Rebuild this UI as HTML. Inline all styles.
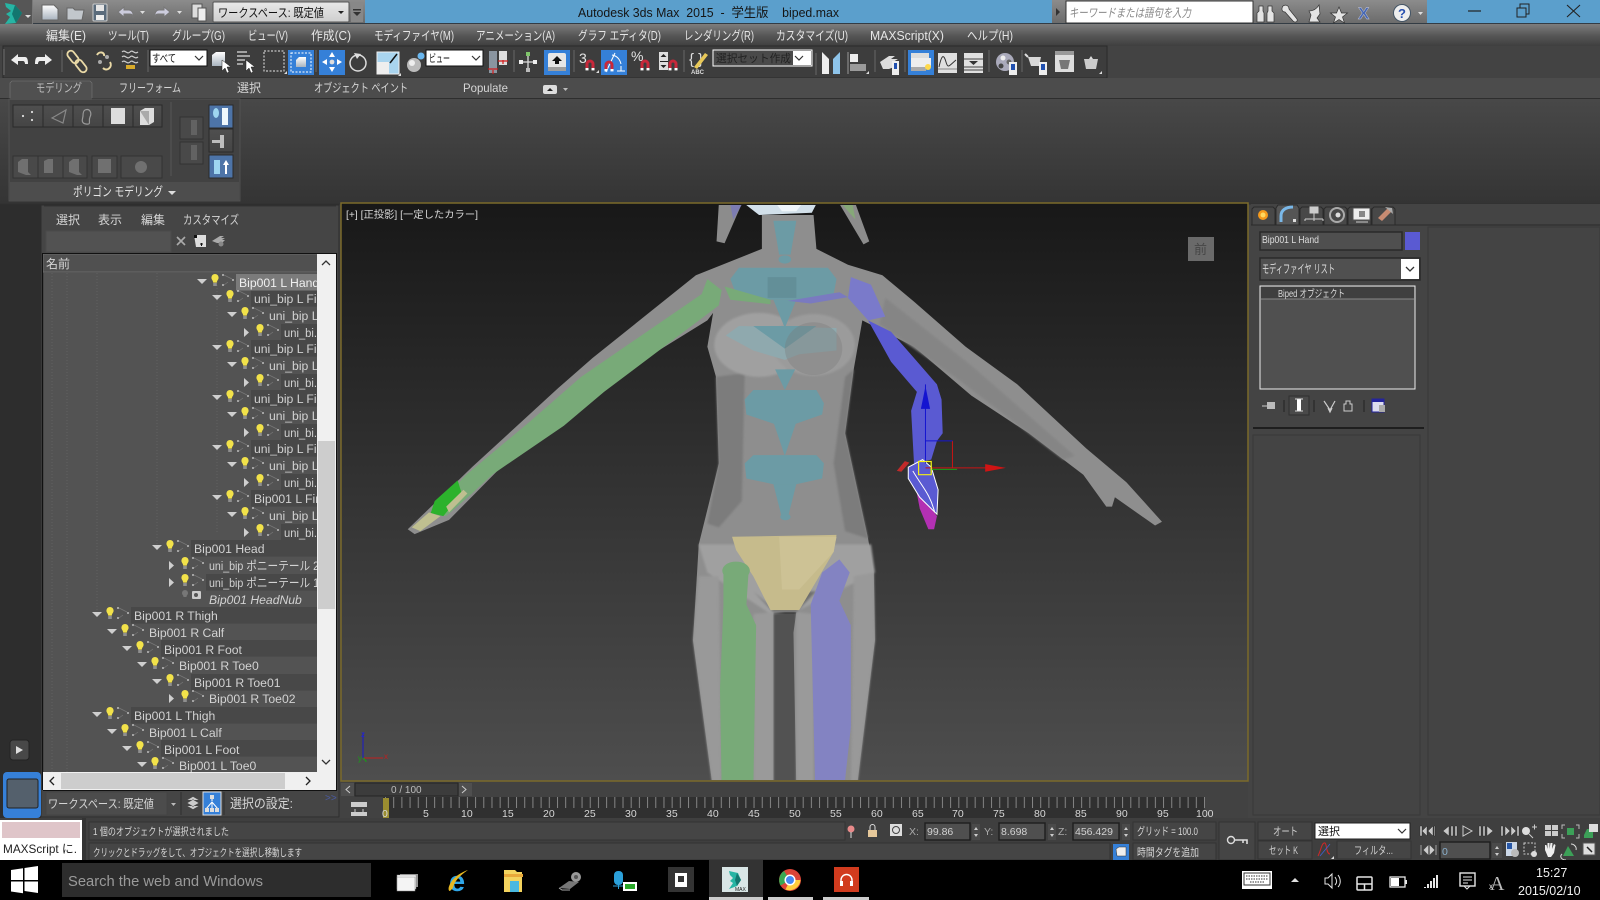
<!DOCTYPE html>
<html lang="ja"><head><meta charset="utf-8"><title>Autodesk 3ds Max 2015</title>
<style>
html,body{margin:0;padding:0;background:#444;width:1600px;height:900px;overflow:hidden}
svg{display:block;position:absolute;left:0;top:0}
text{font-family:"Liberation Sans","Noto Sans CJK JP",sans-serif;font-size:12px;fill:#d6d6d6}
.m text,.m{font-size:12.5px;fill:#e6e6e6}
.n{vector-effect:non-scaling-stroke}
.k{fill:#111}
.g{fill:#a9a9a9}
.t{font-size:12.2px;fill:#d2d2d2}
</style></head><body>
<svg width="1600" height="900" viewBox="0 0 1600 900" xmlns="http://www.w3.org/2000/svg">
<defs>
<linearGradient id="qa" x1="0" y1="0" x2="0" y2="1"><stop offset="0" stop-color="#8c8c8c"/><stop offset="1" stop-color="#6a6a6a"/></linearGradient>
<linearGradient id="menu" x1="0" y1="0" x2="0" y2="1"><stop offset="0" stop-color="#7d7d7d"/><stop offset=".55" stop-color="#555"/><stop offset="1" stop-color="#3f3f3f"/></linearGradient>
<linearGradient id="rib" x1="0" y1="0" x2="0" y2="1"><stop offset="0" stop-color="#484848"/><stop offset="1" stop-color="#343434"/></linearGradient>
<linearGradient id="vp" x1="0" y1="0" x2="0" y2="1"><stop offset="0" stop-color="#181818"/><stop offset="1" stop-color="#4e4e4e"/></linearGradient>
<linearGradient id="wk" x1="0" y1="0" x2="0" y2="1"><stop offset="0" stop-color="#e8e8e8"/><stop offset="1" stop-color="#cfcfcf"/></linearGradient>
<linearGradient id="ic" x1="0" y1="0" x2="0" y2="1"><stop offset="0" stop-color="#fff"/><stop offset="1" stop-color="#a9b4bf"/></linearGradient>
<linearGradient id="btn" x1="0" y1="0" x2="0" y2="1"><stop offset="0" stop-color="#4f4f4f"/><stop offset="1" stop-color="#454545"/></linearGradient>
<pattern id="tick" x="385" y="797" width="8.19" height="12" patternUnits="userSpaceOnUse"><rect width="1" height="11" fill="#858585"/></pattern>
<clipPath id="tree"><rect x="44" y="273" width="273" height="499"/></clipPath>
<clipPath id="vpc"><rect x="342" y="205" width="905" height="575"/></clipPath>
<filter id="sf" x="-5%" y="-5%" width="110%" height="110%"><feGaussianBlur stdDeviation="2 2.5"/></filter>
<g id="bulb" transform="translate(0 2)"><path d="M-24 -10a3.6 3.6 0 0 1 3.6 3.6c0 2-1.6 2.6-1.800 5h-3.600c-.2-2.400-1.800-3-1.800-5a3.600 3.600 0 0 1 3.600-3.600z" fill="#f2e24a"/><rect x="-25.800" y="-1" width="3.600" height="3" fill="#8f8f8f"/><circle cx="-16" cy="-9" r=".9" fill="#ddd"/><circle cx="-16" cy="1" r=".9" fill="#ddd"/><circle cx="-6" cy="-4" r=".9" fill="#ddd"/><path d="M-15 -9l8 4M-15 1l4-3" stroke="#777" stroke-width=".7" fill="none"/></g>
<g id="e"><path d="M-42 -3h10l-5 5z" fill="#cfcfcf"/><use href="#bulb"/></g>
<g id="c"><path d="M-40 -4l5 4.500-5 4.500z" fill="#cfcfcf"/><use href="#bulb"/></g>
<g id="magr"><path d="M-4.500 6v-6a4.500 4.500 0 0 1 9 0v6h-3v-6a1.500 1.500 0 0 0-3 0v6z" fill="#c8283a"/><rect x="-4.500" y="4" width="3" height="2.400" fill="#fff"/><rect x="1.500" y="4" width="3" height="2.400" fill="#fff"/></g>
<path id="cor" d="M0 3l3-3v3z" fill="#ddd"/>
</defs>

<!-- base -->
<rect width="1600" height="900" fill="#444"/>
<rect y="204" width="41" height="656" fill="#2d2d2d"/>

<!-- title bar -->
<rect width="1600" height="24" fill="#5b9fcc"/>
<rect width="365" height="24" fill="url(#qa)"/>
<rect x="1052" width="375" height="24" fill="url(#qa)"/>
<rect y="23" width="1600" height="1" fill="#333c44"/>
<text x="578" y="17" style="font-size:13px;fill:#151515" textLength="261" lengthAdjust="spacingAndGlyphs" xml:space="preserve">Autodesk 3ds Max  2015  -  学生版    biped.max</text>
<!-- logo -->
<rect x="0" y="0" width="33" height="33" fill="#787878"/><rect x="0" y="0" width="32" height="25" fill="#565656"/>
<rect x="0" y="25" width="33" height="8" fill="#b5b5b5"/>
<path d="M5 3l10 2 7 8-6 10-11 1 5-7-4-3 5-3-5-4z" fill="#27b5a4"/><path d="M15 5l7 8-6 10-4-9z" fill="#13776f"/>
<text x="9" y="32" style="font-size:7px;fill:#222;font-weight:bold">MAX</text>
<path d="M25 15h6l-3 3z" fill="#ddd"/>
<!-- QAT -->
<g fill="none" stroke="#e6e6e6">
<path d="M42 5h12l4 4v11H42z" fill="url(#ic)" stroke="#666"/>
<path d="M67 8h6l2 2h9l-2 10H67z" fill="#c2c7cc" stroke="#666"/>
<rect x="93" y="4" width="14" height="17" rx="1" fill="#5a6b7b" stroke="#ccc"/><rect x="96" y="5" width="8" height="6" fill="#e5e5e5" stroke="none"/><rect x="96" y="15" width="8" height="5" fill="#eee" stroke="none"/>
<path d="M124 7l-6 5 6 5v-3h6c2 0 3 1 3 4 1-6-2-8-4-8h-5z" fill="#ccd" stroke="#777"/>
<path d="M164 7l6 5-6 5v-3h-6c-2 0-3 1-3 4-1-6 2-8 4-8h5z" fill="#ccd" stroke="#777"/>
<rect x="192" y="4" width="10" height="14" fill="#ddd" stroke="#555"/><rect x="198" y="8" width="8" height="13" fill="#eee" stroke="#555"/>
</g>
<path d="M140 11h5l-2.500 3zM177 11h5l-2.500 3z" fill="#ddd"/>
<rect x="213" y="2" width="136" height="20" rx="1" fill="url(#wk)" stroke="#555"/>
<text x="218" y="17" class="k" textLength="106" lengthAdjust="spacingAndGlyphs">ワークスペース: 既定値</text>
<path d="M338 11h6l-3 3z" fill="#222"/>
<rect x="351" y="2" width="12" height="20" fill="#888"/><path d="M353 9h8v1.500h-8zM353 12h8l-4 4z" fill="#333"/>
<!-- search -->
<path d="M1056 8l4 4-4 4z" fill="#333"/>
<rect x="1066" y="1" width="187" height="22" fill="#fff" stroke="#333"/>
<text x="1069" y="17" style="font-style:italic;fill:#888;font-size:12px" textLength="122" lengthAdjust="spacingAndGlyphs">キーワードまたは語句を入力</text>
<g fill="#e4e4e4" stroke="#333" stroke-width=".7">
<path d="M1259 6h4v5l1 2v9h-7v-9l2-2zM1268 6h4v5l2 2v9h-7v-9l1-2z"/>
<path d="M1283 6c3-2 6 0 6 3l8 10c1 3-2 4-4 2l-8-9c-3 0-4-3-2-6z"/>
<path d="M1309 22h11l-3-4 3-4-1-9c-3 5-7 6-10 6l2 4z"/>
<path d="M1339 7l2.500 6h6l-5 4 2 6-5.500-3.500-5.500 3.500 2-6-5-4h6z"/>
</g>
<text x="1358" y="19" style="font-size:17px;font-weight:bold;fill:#4668b4;stroke:#ccd;stroke-width:.4">X</text>
<circle cx="1402" cy="13" r="8.500" fill="#eee" stroke="#456"/><text x="1398" y="18" style="font-size:13px;font-weight:bold;fill:#2850b0">?</text>
<path d="M1418 12h5l-2.500 3z" fill="#ddd"/>
<path d="M1468 11h13" stroke="#222" stroke-width="1.200"/>
<path d="M1517 8h9v9h-9zM1520 8V4h9v10h-3" fill="none" stroke="#222" stroke-width="1"/>
<path d="M1567 5l13 12M1580 5l-13 12" stroke="#222" stroke-width="1.100"/>

<!-- menu bar -->
<rect y="24" width="1600" height="22" fill="url(#menu)"/>
<g class="m">
<text x="46" y="40" textLength="40" lengthAdjust="spacingAndGlyphs">編集(E)</text>
<text x="108" y="40" textLength="41" lengthAdjust="spacingAndGlyphs">ツール(T)</text>
<text x="172" y="40" textLength="53" lengthAdjust="spacingAndGlyphs">グループ(G)</text>
<text x="248" y="40" textLength="40" lengthAdjust="spacingAndGlyphs">ビュー(V)</text>
<text x="311" y="40" textLength="40" lengthAdjust="spacingAndGlyphs">作成(C)</text>
<text x="374" y="40" textLength="80" lengthAdjust="spacingAndGlyphs">モディファイヤ(M)</text>
<text x="476" y="40" textLength="79" lengthAdjust="spacingAndGlyphs">アニメーション(A)</text>
<text x="578" y="40" textLength="83" lengthAdjust="spacingAndGlyphs">グラフ エディタ(D)</text>
<text x="684" y="40" textLength="70" lengthAdjust="spacingAndGlyphs">レンダリング(R)</text>
<text x="776" y="40" textLength="72" lengthAdjust="spacingAndGlyphs">カスタマイズ(U)</text>
<text x="870" y="40" textLength="74" lengthAdjust="spacingAndGlyphs">MAXScript(X)</text>
<text x="967" y="40" textLength="46" lengthAdjust="spacingAndGlyphs">ヘルプ(H)</text>
</g>

<!-- main toolbar -->
<rect y="46" width="1600" height="32" fill="#434343"/>
<rect x="3" y="46" width="1104" height="32" fill="#3d3d3d" stroke="#2a2a2a"/>
<rect x="3" y="49" width="2" height="26" fill="#555"/>
<g id="tb">
<path d="M11 60l7-6v3h7c2 0 3 2 3 7h-3c0-2-1-3-2-3h-5v4z" fill="#eee"/>
<path d="M52 60l-7-6v3h-7c-2 0-3 2-3 7h3c0-2 1-3 2-3h5v4z" fill="#eee"/>
<path d="M62 50v22" stroke="#666"/>
<g fill="none" stroke="#e9d9a6" stroke-width="1.800"><rect x="-3.500" y="-7" width="7" height="14" rx="3.500" transform="translate(73 57) rotate(-38)"/><rect x="-3.500" y="-7" width="7" height="14" rx="3.500" transform="translate(81 66) rotate(-38)"/></g>
<path d="M97 55c2-4 8-3 7 1M110 62c3 5-3 10-7 6" fill="none" stroke="#e9d9a6" stroke-width="2"/><circle cx="100" cy="62" r="2" fill="#aaa"/><circle cx="107" cy="57" r="2" fill="#aaa"/>
<path d="M122 52c3-3 5 3 8 0s4 3 8 0M122 57c3-3 5 3 8 0s4 3 8 0M122 62c3-3 5 3 8 0s4 3 8 0" fill="none" stroke="#ccc" stroke-width="1.200"/><path d="M126 67h9" stroke="#d8aa2a" stroke-width="4"/>
<path d="M148 50v22" stroke="#666"/>
<rect x="150" y="50" width="57" height="16" fill="#fff" stroke="#111"/>
<text x="152" y="62" class="k" style="font-size:11px" textLength="24" lengthAdjust="spacingAndGlyphs">すべて</text>
<path d="M195 56l4 4 4-4" fill="none" stroke="#333" stroke-width="1.200"/>
<path d="M212 55l4-3h9v14h-13z" fill="url(#ic)"/>
<path d="M222 60l9 7-4 0 2 5-2 1-2-5-3 3z" fill="#fff" stroke="#222" stroke-width=".5"/>
<path d="M237 52h10M237 56h13M237 60h8M237 64h6" stroke="#ddd" stroke-width="1.300"/>
<path d="M246 60l9 7-4 0 2 5-2 1-2-5-3 3z" fill="#fff" stroke="#222" stroke-width=".5"/>
<rect x="264" y="51" width="20" height="20" fill="none" stroke="#e6e6e6" stroke-dasharray="2 1.500"/><use href="#cor" x="284" y="71"/>
<rect x="288" y="50" width="26" height="25" fill="#3580d8"/><rect x="291" y="53" width="20" height="19" fill="none" stroke="#fff" stroke-dasharray="2 1.500"/><path d="M296 60l3-3h7v10h-10z" fill="url(#ic)"/>
<path d="M316 50v22" stroke="#666"/>
<rect x="319" y="50" width="26" height="25" fill="#3580d8"/><circle cx="332" cy="62" r="2.400" fill="#ddd"/><path d="M332 52l3 5h-6zM332 72l3-5h-6zM322 62l5-3v6zM342 62l-5-3v6z" fill="#fff"/>
<circle cx="358" cy="63" r="8" fill="none" stroke="#ddd" stroke-width="1.500"/><path d="M354 53l7 1-4 5z" fill="#ddd"/>
<rect x="377" y="52" width="22" height="22" fill="#a9d4ee" stroke="#eee"/><rect x="377" y="62" width="12" height="12" fill="#eee"/><path d="M390 63l7-9" stroke="#111" stroke-width="1.500"/><use href="#cor" x="398" y="73"/>
<circle cx="414" cy="65" r="7" fill="#bbb"/><circle cx="412" cy="63" r="3" fill="#eee"/><circle cx="421" cy="56" r="3.500" fill="#6ab7ef"/>
<rect x="426" y="50" width="57" height="16" fill="#fff" stroke="#111"/>
<text x="429" y="62" class="k" style="font-size:11px" textLength="21" lengthAdjust="spacingAndGlyphs">ビュー</text>
<path d="M472 56l4 4 4-4" fill="none" stroke="#333" stroke-width="1.200"/>
<rect x="489" y="51" width="8" height="22" fill="#8a95a0"/><rect x="499" y="51" width="8" height="14" fill="#ddd"/><path d="M493 70v4M488 69h10M503 60v4M498 61h10" stroke="#d01c1c" stroke-width="1.200"/>
<path d="M514 50v22" stroke="#666"/>
<path d="M528 54v16M520 62h16" stroke="#ddd" stroke-width="1.300"/><rect x="526" y="52" width="4" height="4" fill="#7fc46a"/><rect x="519" y="60" width="4" height="4" fill="#eee"/><rect x="533" y="60" width="4" height="4" fill="#eee"/><rect x="526" y="68" width="4" height="4" fill="#bbb"/>
<rect x="544" y="50" width="26" height="25" fill="#3580d8"/><rect x="548" y="53" width="18" height="17" rx="2" fill="#e6e6e6"/><rect x="548" y="67" width="18" height="4" fill="#9e9e9e"/><path d="M557 56l5 5h-3v3h-4v-3h-3z" fill="#111"/>
<path d="M574 50v22" stroke="#666"/>
<text x="579" y="63" style="font-size:14px;fill:#e6e6e6">3</text><use href="#magr" x="590" y="64"/><use href="#cor" x="596" y="70"/>
<rect x="601" y="50" width="26" height="25" fill="#3580d8"/><path d="M606 72l9-19" stroke="#fff"/><path d="M612 55c6 1 8 5 9 9" stroke="#fff" fill="none"/><path d="M617 71h8M621 66v5" stroke="#fff"/><use href="#magr" x="609" y="65"/>
<text x="631" y="61" style="font-size:14px;fill:#e6e6e6">%</text><use href="#magr" x="645" y="64"/>
<rect x="659" y="52" width="9" height="18" fill="#ddd"/><path d="M663.500 54l3 3h-6zM660 61h8v1h-8zM663.500 68l3-3h-6z" fill="#222"/><use href="#magr" x="673" y="64"/>
<path d="M684 50v22" stroke="#666"/>
<text x="689" y="64" style="font-size:15px;fill:#ddd">{ }</text><path d="M694 67l11-14 3 2-11 14z" fill="#e8c858"/><text x="691" y="74" style="font-size:6px;font-weight:bold;fill:#ddd">ABC</text>
<rect x="713" y="50" width="99" height="16" fill="#4a4a4a" stroke="#fff"/><rect x="793" y="51" width="18" height="14" fill="#fff"/>
<text x="716" y="62" style="font-size:11px;fill:#222" textLength="75" lengthAdjust="spacingAndGlyphs">選択セット作成</text>
<path d="M795 56l4 4 4-4" fill="none" stroke="#333" stroke-width="1.200"/>
<path d="M816 53v22" stroke="#666"/>
<path d="M822 52l7 7v15h-7z" fill="#eee"/><path d="M840 52l-7 7v15h7z" fill="#8ec4ea"/>
<path d="M848 52v22" stroke="#999"/><rect x="850" y="54" width="8" height="8" fill="#eee"/><rect x="850" y="64" width="16" height="7" fill="#9a9a9a"/><use href="#cor" x="866" y="71"/>
<path d="M875 50v22" stroke="#666"/>
<path d="M880 62l9-6h6l-4 3h7l-5 3h5l-4 3h5l-10 4h-6z" fill="#ddd"/><rect x="892" y="61" width="7" height="14" fill="#eee"/><rect x="894" y="63" width="3" height="6" fill="#2050b0"/>
<path d="M905 50v22" stroke="#666"/>
<rect x="908" y="50" width="26" height="25" fill="#3580d8"/><rect x="911" y="53" width="18" height="5" fill="#ddd"/><rect x="911" y="58" width="20" height="9" fill="#eee"/><rect x="911" y="67" width="15" height="4" fill="#aaa"/><circle cx="928" cy="67" r="3" fill="#ffd94a"/>
<rect x="938" y="53" width="19" height="20" fill="#e0e0e0"/><path d="M939 67c3-14 5-12 7-5s3 4 10-2" fill="none" stroke="#333"/><path d="M938 69h19" stroke="#888"/>
<rect x="964" y="53" width="19" height="20" fill="#e0e0e0"/><path d="M964 59h19M964 67h19M964 70h19" stroke="#444"/><path d="M969 61h9l-4.500 4z" fill="#333"/>
<path d="M989 50v22" stroke="#666"/>
<circle cx="1005" cy="62" r="9" fill="#aab"/><circle cx="1003" cy="58" r="2.500" fill="#eee"/><circle cx="1009" cy="62" r="2.500" fill="#666"/><circle cx="1001" cy="66" r="2.500" fill="#444"/><rect x="1009" y="62" width="8" height="13" fill="#eee"/><rect x="1011" y="64" width="4" height="6" fill="#2050b0"/>
<path d="M1022 50v22" stroke="#666"/>
<path d="M1028 57h13l-2 9h-8z" fill="#d8d8d8"/><path d="M1028 57l-3-3" stroke="#ddd" stroke-width="2"/><rect x="1039" y="62" width="8" height="13" fill="#eee"/><rect x="1041" y="64" width="4" height="6" fill="#2050b0"/>
<rect x="1055" y="51" width="19" height="21" fill="#ddd"/><rect x="1055" y="51" width="19" height="4" fill="#999"/><path d="M1059 60h11l-2 9h-7z" fill="#777"/>
<path d="M1084 59h14l-2 10h-10z" fill="#ccc"/><path d="M1089 59l2-3 2 3z" fill="#ddd"/><use href="#cor" x="1099" y="71"/>
</g>

<!-- ribbon -->
<rect y="78" width="1600" height="20" fill="#4c4c4c"/>
<rect y="98" width="1600" height="1" fill="#2e2e2e"/>
<rect y="99" width="1600" height="105" fill="url(#rib)"/>
<rect x="9" y="99" width="231" height="102" fill="#424242" stroke="#555" stroke-width=".8"/>
<path d="M10 100v-17l2-2h78l2 2v17z" fill="#505050" stroke="none"/><path d="M10 98v-15l2-2h78l2 2v15" fill="none" stroke="#777" stroke-width=".6"/>
<g class="g" style="font-size:12px">
<text x="36" y="92" style="fill:#bdbdbd" textLength="46" lengthAdjust="spacingAndGlyphs">モデリング</text>
<text x="119" y="92" textLength="62" lengthAdjust="spacingAndGlyphs">フリーフォーム</text>
<text x="237" y="92" textLength="24" lengthAdjust="spacingAndGlyphs">選択</text>
<text x="314" y="92" textLength="94" lengthAdjust="spacingAndGlyphs">オブジェクト ペイント</text>
<text x="463" y="92" textLength="45" lengthAdjust="spacingAndGlyphs">Populate</text>
</g>
<rect x="543" y="85" width="14" height="9" rx="2" fill="#ddd"/><path d="M547 91l3-3 3 3z" fill="#222"/><path d="M563 88h5l-2.500 3z" fill="#bbb"/>
<rect x="10" y="182" width="229" height="19" fill="#4d4d4d"/>
<text x="73" y="196" style="font-size:12.5px;fill:#e4e4e4" textLength="90" lengthAdjust="spacingAndGlyphs">ポリゴン モデリング</text><path d="M168 191h8l-4 4z" fill="#ddd"/>
<path d="M171 102v74" stroke="#555"/>
<g fill="url(#btn)" stroke="#2a2a2a">
<rect x="13" y="105" width="30" height="22"/><rect x="43" y="105" width="30" height="22"/><rect x="73" y="105" width="30" height="22"/><rect x="103" y="105" width="30" height="22"/><rect x="133" y="105" width="29" height="22"/>
<rect x="209" y="129" width="24" height="23"/>
</g>
<g fill="#494949" stroke="#333">
<rect x="13" y="156" width="25" height="22"/><rect x="38" y="156" width="25" height="22"/><rect x="63" y="156" width="24" height="22"/><rect x="92" y="156" width="25" height="22"/><rect x="121" y="156" width="41" height="22"/>
<rect x="180" y="117" width="23" height="22"/><rect x="180" y="142" width="23" height="22"/>
</g>
<g stroke="#2a2a2a" fill="#4d74a8"><rect x="209" y="105" width="24" height="23"/><rect x="209" y="155" width="24" height="23"/></g>
<circle cx="23" cy="116" r="1.100" fill="#ddd"/><circle cx="32" cy="112" r="1.100" fill="#ddd"/><circle cx="32" cy="120" r="1.100" fill="#ddd"/>
<path d="M52 118l14-8-3 13z" fill="none" stroke="#888" stroke-width="1.200"/>
<path d="M85 110c5-2 7 3 5 7s2 8-4 7-3-6-3-8 0-5 2-6z" fill="none" stroke="#999" stroke-width="1.200"/>
<rect x="111" y="108" width="14" height="16" fill="#ddd"/>
<path d="M140 111l5-3h9v14l-5 3h-9z" fill="#ddd"/><path d="M149 125v-14h-9" fill="#aaa"/>
<g fill="#707070"><path d="M18 172v-10l4-3h6v13l3 3h-5zM44 161l4-2h5v14h-9z"/><path d="M69 172v-10l4-3h6v13l3 3h-5z"/><rect x="98" y="159" width="13" height="14"/><circle cx="141" cy="167" r="6"/></g>
<path d="M191 120h6v15h-6zM191 145h6v15h-6z" fill="#626262"/>
<ellipse cx="216" cy="113" rx="3" ry="5" fill="#9fd6f0"/><rect x="222" y="108" width="6" height="17" fill="#eef7fc"/>
<path d="M212 140h8v-5h4v13h-4v-5h-8z" fill="#bdbdbd"/>
<rect x="214" y="160" width="6" height="14" fill="#9fd6f0"/><path d="M226 160l3 5h-2v9h-2v-9h-2z" fill="#fff"/>
<path d="M0 204h1600" stroke="#303030"/>

<!-- scene explorer -->
<rect x="41" y="205" width="298" height="612" fill="#454545" stroke="#2d2d2d"/>
<path d="M44 206h292" stroke="#333"/>
<g class="g" style="fill:#c3c3c3"><text x="56" y="224" textLength="24" lengthAdjust="spacingAndGlyphs">選択</text><text x="98" y="224" textLength="24" lengthAdjust="spacingAndGlyphs">表示</text><text x="141" y="224" textLength="24" lengthAdjust="spacingAndGlyphs">編集</text><text x="183" y="224" textLength="56" lengthAdjust="spacingAndGlyphs">カスタマイズ</text></g>
<rect x="46" y="231" width="125" height="21" fill="#525252" stroke="#4a4a4a"/>
<path d="M177 237l8 8M185 237l-8 8" stroke="#aaa" stroke-width="1.600"/>
<path d="M194 235h12v12h-10z" fill="#ddd"/><rect x="194" y="235" width="3" height="3" fill="#111"/><path d="M200 244h3M201.500 243v3" stroke="#111"/>
<path d="M212 241l8-5h4l-3 2h4l-3 2h3l-3 3h-5z" fill="#aaa"/><circle cx="221" cy="244" r="2.500" fill="#888"/>
<rect x="43" y="254" width="275" height="18" fill="#505050" stroke="#6a6a6a"/>
<text x="46" y="268" style="fill:#d5d5d5" textLength="24" lengthAdjust="spacingAndGlyphs">名前</text>
<rect x="44" y="273" width="273" height="499" fill="#535353"/>
<rect x="317" y="254" width="19" height="536" fill="#f0f0f0"/>
<rect x="318" y="441" width="17" height="168" fill="#cdcdcd"/>
<path d="M322 265l4-4 4 4M322 760l4 4 4-4" fill="none" stroke="#333" stroke-width="1.300"/>
<rect x="43" y="772" width="293" height="18" fill="#f0f0f0"/>
<rect x="61" y="773" width="224" height="16" fill="#cdcdcd"/>
<path d="M54 777l-4 4 4 4M306 777l4 4-4 4" fill="none" stroke="#222" stroke-width="1.300"/>
<rect x="43" y="790" width="294" height="1" fill="#111"/>
<rect x="42" y="253" width="1" height="537" fill="#111"/><rect x="336" y="253" width="1" height="537" fill="#111"/><rect x="42" y="253" width="295" height="1" fill="#111"/>

<g clip-path="url(#tree)">
<path d="M52 273v499M67 273v499M97 273v345M157 273v276M217 282v250" stroke="#666" stroke-dasharray="1 2" stroke-width=".8"/>
<g fill="#484848">
<rect x="251" y="290" width="66" height="16.600"/><rect x="281" y="324" width="36" height="16.600"/><rect x="251" y="340" width="66" height="16.600"/><rect x="281" y="374" width="36" height="16.600"/><rect x="251" y="390" width="66" height="16.600"/><rect x="281" y="424" width="36" height="16.600"/><rect x="251" y="440" width="66" height="16.600"/><rect x="281" y="474" width="36" height="16.600"/><rect x="251" y="490" width="66" height="16.600"/><rect x="281" y="524" width="36" height="16.600"/>
<rect x="191" y="540" width="126" height="16.600"/><rect x="206" y="574" width="111" height="16.600"/><rect x="131" y="607" width="186" height="16.600"/><rect x="161" y="640" width="156" height="16.600"/><rect x="191" y="674" width="126" height="16.600"/><rect x="131" y="707" width="186" height="16.600"/><rect x="161" y="740" width="156" height="16.600"/>
</g>
<rect x="236" y="274" width="81" height="16.500" fill="#7b7b7b"/>
<use href="#e" x="239" y="282"/><text class="t" x="239" y="287" style="fill:#f0f0f0">Bip001 L Hand</text>
<use href="#e" x="254" y="298"/><text class="t" x="254" y="303">uni_bip L Finger</text>
<use href="#e" x="269" y="315"/><text class="t" x="269" y="320">uni_bip L Finger</text>
<use href="#c" x="284" y="332"/><text class="t" x="284" y="337" textLength="33" lengthAdjust="spacingAndGlyphs">uni_bi.</text>
<use href="#e" x="254" y="348"/><text class="t" x="254" y="353">uni_bip L Finger</text>
<use href="#e" x="269" y="365"/><text class="t" x="269" y="370">uni_bip L Finger</text>
<use href="#c" x="284" y="382"/><text class="t" x="284" y="387" textLength="33" lengthAdjust="spacingAndGlyphs">uni_bi.</text>
<use href="#e" x="254" y="398"/><text class="t" x="254" y="403">uni_bip L Finger</text>
<use href="#e" x="269" y="415"/><text class="t" x="269" y="420">uni_bip L Finger</text>
<use href="#c" x="284" y="432"/><text class="t" x="284" y="437" textLength="33" lengthAdjust="spacingAndGlyphs">uni_bi.</text>
<use href="#e" x="254" y="448"/><text class="t" x="254" y="453">uni_bip L Finger</text>
<use href="#e" x="269" y="465"/><text class="t" x="269" y="470">uni_bip L Finger</text>
<use href="#c" x="284" y="482"/><text class="t" x="284" y="487" textLength="33" lengthAdjust="spacingAndGlyphs">uni_bi.</text>
<use href="#e" x="254" y="498"/><text class="t" x="254" y="503">Bip001 L Finger</text>
<use href="#e" x="269" y="515"/><text class="t" x="269" y="520">uni_bip L Finger</text>
<use href="#c" x="284" y="532"/><text class="t" x="284" y="537" textLength="33" lengthAdjust="spacingAndGlyphs">uni_bi.</text>
<use href="#e" x="194" y="548"/><text class="t" x="194" y="553">Bip001 Head</text>
<use href="#c" x="209" y="565"/><text class="t" x="209" y="570" textLength="110" lengthAdjust="spacingAndGlyphs">uni_bip ポニーテール 2</text>
<use href="#c" x="209" y="582"/><text class="t" x="209" y="587" textLength="110" lengthAdjust="spacingAndGlyphs">uni_bip ポニーテール 1</text>
<path d="M185 590a3 3 0 0 1 3 3c0 2-1.500 2-1.500 4h-3c0-2-1.500-2-1.500-4a3 3 0 0 1 3-3z" fill="#777"/><rect x="192" y="591" width="9" height="8" rx="1" fill="#ccc"/><circle cx="196" cy="595" r="2" fill="#555"/>
<text class="t" x="209" y="604" style="font-style:italic">Bip001 HeadNub</text>
<use href="#e" x="134" y="615"/><text class="t" x="134" y="620">Bip001 R Thigh</text>
<use href="#e" x="149" y="632"/><text class="t" x="149" y="637">Bip001 R Calf</text>
<use href="#e" x="164" y="649"/><text class="t" x="164" y="654">Bip001 R Foot</text>
<use href="#e" x="179" y="665"/><text class="t" x="179" y="670">Bip001 R Toe0</text>
<use href="#e" x="194" y="682"/><text class="t" x="194" y="687">Bip001 R Toe01</text>
<use href="#c" x="209" y="698"/><text class="t" x="209" y="703">Bip001 R Toe02</text>
<use href="#e" x="134" y="715"/><text class="t" x="134" y="720">Bip001 L Thigh</text>
<use href="#e" x="149" y="732"/><text class="t" x="149" y="737">Bip001 L Calf</text>
<use href="#e" x="164" y="749"/><text class="t" x="164" y="754">Bip001 L Foot</text>
<use href="#e" x="179" y="765"/><text class="t" x="179" y="770">Bip001 L Toe0</text>
</g>
<!-- explorer bottom -->
<rect x="46" y="792" width="121" height="23" fill="#4c4c4c" stroke="#444"/>
<text x="48" y="808" style="fill:#d4d4d4" textLength="106" lengthAdjust="spacingAndGlyphs">ワークスペース: 既定値</text>
<path d="M171 803h5l-2.500 3z" fill="#bbb"/><path d="M181 792v23" stroke="#2e2e2e"/>
<path d="M187 803l6-3.500 6 3.500-6 3.500zM187 806l6 3.500 6-3.500M187 800l6-3.500 6 3.500" fill="#ccc" stroke="#444" stroke-width=".5"/>
<rect x="203" y="792" width="18" height="23" fill="#3580d8" stroke="#ddd"/><path d="M212 796v5M206 809l6-7 6 7M212 802v7" stroke="#fff" fill="none"/><rect x="210" y="795" width="4" height="4" fill="#ddd"/><rect x="205" y="808" width="4" height="4" fill="#ddd"/><rect x="210" y="808" width="4" height="4" fill="#ddd"/><rect x="215" y="808" width="4" height="4" fill="#ddd"/>
<path d="M224 792v23" stroke="#2e2e2e"/>
<text x="230" y="808" style="font-size:13px;fill:#d6d6d6" textLength="63" lengthAdjust="spacingAndGlyphs">選択の設定:</text>
<text x="325" y="801" style="font-size:10px;fill:#4a5aa0">&gt;&gt;</text>
<rect x="10" y="740" width="19" height="20" rx="3" fill="#484848" stroke="#222"/><path d="M16 746l7 4-7 4z" fill="#ddd"/>
<rect x="3" y="772" width="38" height="46" rx="4" fill="#3680d8"/><rect x="7" y="779" width="31" height="29" rx="2" fill="#54606c" stroke="#222"/>

<!-- viewport -->
<rect x="341" y="203" width="907" height="578" fill="url(#vp)" stroke="#7b6a2a" stroke-width="1.500"/>
<g clip-path="url(#vpc)">
<g transform="translate(340,200) scale(.574,.3763)">
<path d="M755 1100h40v468h-40z" fill="#525252"/>
<!-- hair & head -->
<path d="M660 10h40l-30 105-14-5zM870 10h28l24 100-10 8z" fill="#8c8c8c"/>
<path d="M680 12h20l-15 40z" fill="#7c7cb2"/><path d="M875 12h18l5 40z" fill="#86a878"/>
<path d="M705 10h125l-8 24-92 6z" fill="#d2e0ea"/><path d="M760 10h45l-10 20h-25z" fill="#f0f6fa"/>
<!-- body silhouette -->
<path d="M735 40L825 40 830 130 885 172 945 200 1000 270 1090 390 1180 490 1300 660 1370 750 1432 855 1420 865 1350 790 1345 815 1335 815 1295 730 1200 620 1100 520 1000 390 910 320 895 450 880 620 920 900 930 990 932 1170 900 1568 795 1568 790 1150 795 1095 755 1095 755 1150 755 1568 650 1568 615 1170 625 915 660 700 655 470 640 390 650 300 640 320 470 480 300 680 190 850 130 888 118 875 230 710 380 500 440 420 620 200 735 130z" fill="#8e8e8e"/>
<g filter="url(#sf)">
<path d="M950 260L1100 440 1280 680 1260 690 1080 480 940 330z" fill="#858585"/>
<path d="M655 470L705 460 700 800 660 870 640 860 660 700z" fill="#7c7c7c"/>
<path d="M880 470L895 450 880 620 920 900 880 880 860 700z" fill="#7c7c7c"/>
<ellipse cx="730" cy="385" rx="78" ry="85" fill="#a0a0a0"/>
<ellipse cx="825" cy="385" rx="72" ry="82" fill="#9b9b9b"/>
<path d="M625 915L925 915 932 990 800 1090 750 1100 640 990z" fill="#a0a0a0"/>
<path d="M625 1000L660 1000 665 1568 650 1568 615 1170z" fill="#999"/>
<path d="M895 1000L930 990 932 1170 900 1568 890 1568z" fill="#999"/>
<path d="M720 1100L755 1095 755 1568 720 1568zM795 1095L825 1100 825 1568 795 1568z" fill="#9a9a9a"/>
<path d="M720 1040l35 55h40l35-55-20 0-60 40z" fill="#6e6e6e"/>
</g>
<!-- teal -->
<g fill="#6c9ba5">
<path d="M755 55h40l-10 90h-20z"/><circle cx="775" cy="158" r="11"/>
<path d="M695 180L850 180 865 210 860 250 800 265 745 265 690 250 680 210z"/>
<path d="M745 205h50v55h-50z" fill="#638f98"/>
<path d="M755 265h40l-20 75z"/>
<path d="M695 335L865 340 865 400 800 410 775 425 720 400 672 360z" fill="#8fa9ae"/>
<path d="M720 335h110l-55 60z"/>
<path d="M758 450h35l-18 55z"/>
<path d="M720 505L830 505 843 540 840 570 790 597 760 597 708 570 705 530z"/>
<path d="M755 590h40l-20 90z"/>
<path d="M720 678L830 678 843 700 840 740 790 757 760 757 708 740 705 700z"/>
<path d="M755 755h40l-15 90-10 0z"/><circle cx="776" cy="842" r="9"/>
</g>
<ellipse cx="825" cy="395" rx="50" ry="70" fill="#777" opacity=".35"/>
<!-- green arm -->
<g fill="#78aa78">
<path d="M640 210L665 240 660 280 460 510 390 600 265 730 230 780 185 840 160 825 220 730 330 590 420 470 630 250z"/>
<path d="M670 230L750 265 750 277 680 265z"/>
</g>
<path d="M165 800L205 745 212 780 180 840 158 832z" fill="#2cb22c"/>
<path d="M185 815L215 770 222 780 190 830zM125 870L155 830 175 840 140 880z" fill="#bfbf90"/>
<!-- blue arm -->
<path d="M890 205L925 225 950 310 920 320 885 260z" fill="#7a7aca"/>
<path d="M780 268L870 245 885 258 820 275z" fill="#7a7ac0"/>
<path d="M920 320L960 350 1000 420 1040 490 1048 530 1050 620 1040 640 1030 690 1000 700 995 560 1005 510 960 430z" fill="#5a5ad2"/>
<path d="M1005 780l7 0 28 60-5 35-10 0-15-55z" fill="#b330b3"/>
<path d="M990 710L1015 690 1030 710 1042 770 1040 835 1010 790 990 740z" fill="#5a5ad2" stroke="#fff" stroke-width="1" vector-effect="non-scaling-stroke"/>
<path d="M998 720c15 40 30 60 38 110" fill="none" stroke="#fff" class="n"/>
<!-- gizmo -->
<path d="M1020 490V700" stroke="#1414d0" class="n"/><path d="M1020 495l8 60h-16z" fill="#1414d0"/>
<path d="M1020 712H1130" stroke="#c81414" class="n"/><path d="M1160 712l-36-10v20z" fill="#d01414"/>
<path d="M1067 640v72" fill="none" stroke="#c81414" class="n"/><path d="M1020 640h47" stroke="#1414d0" class="n"/>
<path d="M1030 700v25M1030 716h45" stroke="#16a016" class="n"/>
<path d="M970 720l14-26 8 4-14 24z" fill="#c02a2a"/>
<rect x="1008" y="695" width="22" height="35" fill="none" stroke="#f4f014" stroke-width="1.200" class="n"/>
<!-- pelvis -->
<path d="M683 895L865 890 860 935 800 1090 750 1090 720 1000 690 930z" fill="#c6bb8c"/>
<path d="M765 895h100l-5 40-60 100-30 0z" fill="#cdc295"/>
<!-- legs -->
<circle cx="690" cy="985" r="24" fill="#78aa78"/>
<path d="M668 985L712 985 708 1075 725 1130 720 1568 665 1568 662 1300 668 1075z" fill="#78aa78"/>
<path d="M840 990L870 955 888 990 870 1065 890 1130 890 1400 878 1568 828 1568 820 1075z" fill="#8383c2"/>
</g>
<rect x="1188" y="237" width="26" height="24" fill="#6a6a6a"/>
<text x="1194" y="254" style="font-size:13px;fill:#464646">前</text>
<text x="346" y="218" style="font-size:10px;fill:#d8d8d8" textLength="132" lengthAdjust="spacingAndGlyphs">[+] [正投影] [一定したカラー]</text>
<path d="M363 733V758" stroke="#1a1acc" fill="none"/><path d="M364 758H383" stroke="#c02020"/><path d="M363 758l3 3v1" stroke="#16a016" fill="none"/>
<text x="361" y="737" style="font-size:8px;fill:#2424d8">z</text><text x="384" y="759" style="font-size:8px;fill:#c02020">x</text><text x="358" y="761" style="font-size:8px;fill:#16a016">y</text>
</g>

<!-- right panel -->
<rect x="1251" y="204" width="349" height="616" fill="#444"/>
<path d="M1251 225h349" stroke="#2a2a2a"/>
<g fill="#484848" stroke="#2a2a2a">
<path d="M1252 225v-16l2-2h19l2 2v16z"/><path d="M1276 225v-17l2-3h19l2 3v17z" fill="#555"/><path d="M1300 225v-16l2-2h19l2 2v16z"/><path d="M1324 225v-16l2-2h19l2 2v16z"/><path d="M1348 225v-16l2-2h19l2 2v16z"/><path d="M1372 225v-16l2-2h19l2 2v16z"/>
</g>
<circle cx="1263" cy="215" r="5" fill="#f59a1c"/><circle cx="1263" cy="215" r="2.500" fill="#ffd860"/>
<path d="M1281 222v-6c0-6 5-9 12-9" fill="none" stroke="#7ab8e8" stroke-width="3"/><rect x="1293" y="219" width="3" height="3" fill="#ddd"/>
<path d="M1310 207h8v6h-8zM1314 213v4M1305 219h18M1305 219v2M1314 217v4M1323 219v2" fill="#ccc" stroke="#ccc"/>
<circle cx="1337" cy="215" r="7" fill="none" stroke="#aaa" stroke-width="2"/><circle cx="1338" cy="215" r="2.500" fill="#ddd"/>
<rect x="1353" y="208" width="17" height="12" fill="#eee" stroke="#555"/><rect x="1359" y="211" width="6" height="6" fill="#888"/><path d="M1356 222h12" stroke="#ccc"/>
<path d="M1378 218l10-10 4 3-10 10z" fill="#c78b72"/><path d="M1385 207l7 1 1 6z" fill="#aaa"/>
<rect x="1260" y="232" width="142" height="18" fill="#4f4f4f" stroke="#2a2a2a" stroke-width="1.500"/>
<text x="1262" y="243" style="font-size:10.500px;fill:#ddd" textLength="57" lengthAdjust="spacingAndGlyphs">Bip001 L Hand</text>
<rect x="1405" y="232" width="15" height="18" fill="#5a5ad2"/>
<rect x="1260" y="258" width="160" height="22" fill="#505050" stroke="#2a2a2a" stroke-width="1.500"/>
<rect x="1401" y="259" width="18" height="20" fill="#fff"/><path d="M1406 267l4 4 4-4" fill="none" stroke="#333" stroke-width="1.300"/>
<text x="1262" y="273" style="fill:#dcdcdc" textLength="73" lengthAdjust="spacingAndGlyphs">モディファイヤ リスト</text>
<rect x="1260" y="286" width="155" height="103" fill="#505050" stroke="#ededed"/>
<rect x="1261" y="287" width="153" height="12" fill="#3f3f3f"/><path d="M1261 299h153" stroke="#888"/>
<text x="1278" y="297" style="font-size:10.500px;fill:#dcdcdc" textLength="67" lengthAdjust="spacingAndGlyphs">Biped オブジェクト</text>
<path d="M1262 406h6" stroke="#ccc"/><rect x="1267" y="402" width="8" height="7" fill="#bbb"/><path d="M1284 400v12" stroke="#222"/>
<rect x="1289" y="396" width="20" height="19" fill="#4a4a4a" stroke="#2f2f2f"/><rect x="1297" y="399" width="4" height="12" fill="#fff"/><path d="M1295 399h8M1295 411h8" stroke="#ddd"/>
<path d="M1314 400v12" stroke="#222"/>
<path d="M1324 401l6 9 5-9M1328 408l2 4 2-4" fill="none" stroke="#ccc" stroke-width="1.200"/><path d="M1346 401h4v3h2v7h-8v-7h2z" fill="none" stroke="#ccc"/>
<path d="M1364 400v12" stroke="#222"/>
<rect x="1372" y="399" width="12" height="13" fill="#dde" stroke="#24249c"/><rect x="1372" y="399" width="12" height="3" fill="#24249c"/><rect x="1379" y="405" width="6" height="7" fill="#aaa"/>
<path d="M1253 428h171" stroke="#111" stroke-width="1.500"/>
<rect x="1253" y="435" width="167" height="380" fill="none" stroke="#393939"/>
<rect x="1428" y="227" width="172" height="588" fill="none" stroke="#393939"/>

<!-- time slider -->
<rect x="340" y="782" width="908" height="38" fill="#424242"/>
<rect x="341" y="783" width="13" height="13" fill="#4f4f4f"/><rect x="355" y="783" width="103" height="13" fill="#3c3c3c" stroke="#252525"/><rect x="459" y="783" width="13" height="13" fill="#4f4f4f"/>
<path d="M350 786l-4 3.500 4 3.500M462 786l4 3.500-4 3.500" fill="none" stroke="#ccc"/>
<text x="391" y="793" style="font-size:10px;fill:#bcbcbc">0 / 100</text>
<rect x="383" y="797" width="865" height="22" fill="#303030"/>
<rect x="1204" y="797" width="44" height="22" fill="#424242"/>
<rect x="385" y="797" width="820" height="11" fill="url(#tick)"/>
<path d="M351 802h16v5h-16zM351 812h16v4h-16" fill="#ccc"/><path d="M355 809v3M363 809v3" stroke="#ccc"/>
<rect x="383" y="798" width="6" height="21" fill="#9a8d30"/>
<g style="fill:#c8c8c8"><text x="382" y="817" style="font-size:10.500px;fill:#d8d8d8">0</text>
<text x="423" y="817" style="font-size:10.500px">5</text><text x="461" y="817" style="font-size:10.500px">10</text><text x="502" y="817" style="font-size:10.500px">15</text><text x="543" y="817" style="font-size:10.500px">20</text><text x="584" y="817" style="font-size:10.500px">25</text><text x="625" y="817" style="font-size:10.500px">30</text><text x="666" y="817" style="font-size:10.500px">35</text><text x="707" y="817" style="font-size:10.500px">40</text><text x="748" y="817" style="font-size:10.500px">45</text><text x="789" y="817" style="font-size:10.500px">50</text><text x="830" y="817" style="font-size:10.500px">55</text><text x="871" y="817" style="font-size:10.500px">60</text><text x="912" y="817" style="font-size:10.500px">65</text><text x="952" y="817" style="font-size:10.500px">70</text><text x="993" y="817" style="font-size:10.500px">75</text><text x="1034" y="817" style="font-size:10.500px">80</text><text x="1075" y="817" style="font-size:10.500px">85</text><text x="1116" y="817" style="font-size:10.500px">90</text><text x="1157" y="817" style="font-size:10.500px">95</text><text x="1196" y="817" style="font-size:10.500px">100</text></g>

<!-- status bar -->
<rect y="818" width="1600" height="42" fill="#3f3f3f"/>
<rect x="0" y="820" width="84" height="40" fill="#fff"/>
<rect x="2" y="822" width="78" height="16" fill="#dfc5c9"/>
<rect x="82" y="818" width="4" height="42" fill="#333"/>
<text x="3" y="853" style="font-size:12px;fill:#222" textLength="74" lengthAdjust="spacingAndGlyphs">MAXScript に.</text>
<rect x="89" y="822" width="756" height="18" fill="#454545" stroke="#333"/>
<rect x="89" y="843" width="1021" height="17" fill="#454545" stroke="#333"/>
<text x="93" y="835" style="font-size:10.500px;fill:#d6d6d6" textLength="136" lengthAdjust="spacingAndGlyphs">1 個のオブジェクトが選択されました</text>
<text x="93" y="856" style="font-size:10.500px;fill:#d6d6d6" textLength="209" lengthAdjust="spacingAndGlyphs">クリックとドラッグをして、オブジェクトを選択し移動します</text>
<circle cx="851" cy="829" r="3.500" fill="#e88a8a"/><path d="M851 832v6" stroke="#ddd"/>
<rect x="868" y="830" width="9" height="7" fill="#e6c89a"/><path d="M870 830v-3a2.500 2.500 0 0 1 5 0v3" fill="none" stroke="#ddd"/>
<rect x="890" y="824" width="12" height="12" fill="#ddd"/><circle cx="896" cy="830" r="3.500" fill="none" stroke="#444"/>
<text x="909" y="835" style="font-size:10.500px;fill:#aaa">X:</text>
<rect x="925" y="823" width="45" height="17" fill="#4f4f4f" stroke="#1e1e1e" stroke-width="1.400"/><text x="927" y="835" style="font-size:10.500px;fill:#d2d2d2">99.86</text>
<rect x="972" y="824" width="8" height="16" fill="#4a4a4a"/><path d="M974 830l2-3 2 3zM974 834l2 3 2-3z" fill="#ccc"/>
<text x="984" y="835" style="font-size:10.500px;fill:#aaa">Y:</text>
<rect x="999" y="823" width="46" height="17" fill="#4f4f4f" stroke="#1e1e1e" stroke-width="1.400"/><text x="1001" y="835" style="font-size:10.500px;fill:#d2d2d2">8.698</text>
<rect x="1048" y="824" width="8" height="16" fill="#4a4a4a"/><path d="M1050 830l2-3 2 3zM1050 834l2 3 2-3z" fill="#ccc"/>
<text x="1058" y="835" style="font-size:10.500px;fill:#aaa">Z:</text>
<rect x="1073" y="823" width="46" height="17" fill="#4f4f4f" stroke="#1e1e1e" stroke-width="1.400"/><text x="1075" y="835" style="font-size:10.500px;fill:#d2d2d2">456.429</text>
<rect x="1122" y="824" width="8" height="16" fill="#4a4a4a"/><path d="M1124 830l2-3 2 3zM1124 834l2 3 2-3z" fill="#ccc"/>
<rect x="1133" y="822" width="83" height="18" fill="#454545" stroke="#333"/>
<text x="1137" y="835" style="font-size:11px;fill:#d6d6d6" textLength="61" lengthAdjust="spacingAndGlyphs">グリッド = 100.0</text>
<rect x="1113" y="844" width="16" height="16" fill="#3580d8"/><path d="M1116 849l3-2h7v9h-9z" fill="#eee" stroke="#333" stroke-width=".5"/>
<rect x="1133" y="843" width="83" height="17" fill="#454545" stroke="#333"/>
<text x="1137" y="856" style="font-size:11px;fill:#d6d6d6" textLength="62" lengthAdjust="spacingAndGlyphs">時間タグを追加</text>
<rect x="1219" y="822" width="36" height="38" fill="#454545" stroke="#333"/>
<circle cx="1231" cy="840" r="3.500" fill="none" stroke="#ddd" stroke-width="1.400"/><path d="M1234 840h13v4M1243 840v3" fill="none" stroke="#ddd" stroke-width="1.600"/>
<rect x="1258" y="822" width="54" height="18" fill="#454545" stroke="#333"/><rect x="1258" y="841" width="54" height="18" fill="#454545" stroke="#333"/>
<text x="1273" y="835" style="font-size:11px;fill:#cfcfcf" textLength="25" lengthAdjust="spacingAndGlyphs">オート</text>
<text x="1269" y="854" style="font-size:11px;fill:#cfcfcf" textLength="29" lengthAdjust="spacingAndGlyphs">セット K</text>
<rect x="1315" y="823" width="95" height="16" fill="#fff" stroke="#222"/>
<text x="1318" y="835" style="font-size:11px;fill:#111" textLength="22" lengthAdjust="spacingAndGlyphs">選択</text>
<path d="M1398 829l4 4 4-4" fill="none" stroke="#333" stroke-width="1.200"/>
<path d="M1318 856c3-6 4-14 7-13 2 1 1 11 5 11" fill="none" stroke="#d02828"/><path d="M1320 856l10-12" stroke="#4060d0" stroke-width=".8"/><use href="#cor" x="1331" y="856"/>
<rect x="1337" y="841" width="74" height="18" fill="#454545" stroke="#333"/>
<text x="1354" y="854" style="font-size:11px;fill:#cfcfcf" textLength="39" lengthAdjust="spacingAndGlyphs">フィルタ...</text>
<!-- playback -->
<g fill="#c8c8c8" stroke="#222" stroke-width=".4">
<path d="M1420 826h2v10h-2zM1422 831l5-5v10zM1428 831l5-5v10zM1435 826h-1v10h1z"/>
<path d="M1443 831l6-5v10zM1451 826h2v10h-2zM1455 826h2v10h-2z"/>
<path d="M1463 826l9 5-9 5z" fill="none" stroke="#ccc" stroke-width="1"/>
<path d="M1479 826h2v10h-2zM1483 826h2v10h-2zM1487 826l6 5-6 5z"/>
<path d="M1501 826h2v10h-2zM1505 826l5 5-5 5zM1511 826l5 5-5 5zM1517 826h2v10h-2z"/>
</g>
<circle cx="1526" cy="831" r="4" fill="#ddd"/><path d="M1529 834l4 4M1532 827h5M1534.500 824.500v5" stroke="#ccc"/>
<path d="M1545 825h6v5h-6zM1552 825h6v5h-6zM1545 831h6v5h-6zM1552 831h6v5h-6z" fill="#ccc"/>
<path d="M1565 825h-3v4M1576 825h3v4M1565 838h-3v-4M1576 838h3v-4" fill="none" stroke="#bbb"/><rect x="1567" y="828" width="7" height="7" fill="#3ca058"/>
<path d="M1584 835l3-6h6v9h-9z" fill="#3ca058"/><path d="M1589 824h9v8h-9z" fill="#ddd"/>
<path d="M1421 845v10M1424 850l4-4v8zM1430 846l4 4-4 4zM1436 845v10" fill="#ccc" stroke="#ccc" stroke-width=".7"/>
<rect x="1440" y="842" width="50" height="17" fill="#4f4f4f" stroke="#1e1e1e" stroke-width="1.400"/><text x="1442" y="855" style="font-size:10.500px;fill:#8ab0cc">0</text>
<rect x="1492" y="843" width="10" height="15" fill="#4a4a4a"/><path d="M1495 849l2-3 2 3zM1495 853l2 3 2-3z" fill="#ccc"/>
<rect x="1506" y="842" width="11" height="14" fill="#ccd8e8"/><rect x="1507" y="843" width="5" height="6" fill="#2858a8"/><circle cx="1515" cy="853" r="4" fill="#bbb"/>
<rect x="1524" y="843" width="11" height="11" fill="none" stroke="#ccc" stroke-dasharray="2 1.500"/><circle cx="1534" cy="854" r="3" fill="#ddd"/>
<path d="M1545 850v-5l1.500 0 1 4v-6h2v6l1-6h2l-.5 6 2-5 1.500 1-1.500 8-3 4h-3z" fill="#eee"/>
<path d="M1563 856l5-10 6 10z" fill="#3ca058"/><path d="M1562 854c-3 3 0 6 4 6M1576 850c1-3-2-6-5-6" fill="none" stroke="#ddd"/>
<rect x="1583" y="843" width="12" height="12" fill="#ddd" stroke="#555"/><path d="M1587 847l5 5" stroke="#222" stroke-width="1.500"/>

<!-- taskbar -->
<rect y="860" width="1600" height="40" fill="#000"/>
<path d="M11 870l12-1.700v11.700H11zM24.500 868l13.500-2v14H24.500zM11 881.500h12v11.700l-12-1.700zM24.500 881.500H38v11.500l-13.500-2z" fill="#fff"/>
<rect x="62" y="863" width="309" height="34" fill="#2d2d2d"/>
<text x="68" y="886" style="font-size:14.500px;fill:#9a9a9a" textLength="195" lengthAdjust="spacingAndGlyphs">Search the web and Windows</text>
<rect x="709" y="860" width="54" height="40" fill="#333"/>
<rect x="709" y="897" width="54" height="3" fill="#ccc"/><rect x="768" y="897" width="45" height="3" fill="#ccc"/><rect x="823" y="897" width="46" height="3" fill="#ccc"/>
<rect x="400" y="874" width="18" height="13" fill="#999"/><rect x="397" y="875" width="19" height="14" fill="#fff" stroke="#888" stroke-width=".5"/><rect x="397" y="877" width="18" height="14" fill="#f4f4f4" stroke="#888" stroke-width=".5"/>
<text x="449" y="891" style="font-size:29px;fill:#2fa6e8;font-weight:bold">e</text><path d="M450 891c-4 0 0-15 18-21-9 6-14 12-15 18z" fill="#e8b820"/>
<path d="M504 870h11l2 2h5v20h-18z" fill="#f3d35e"/><rect x="504" y="874" width="19" height="3" fill="#e8a83a"/><rect x="510" y="881" width="9" height="11" fill="#49b8e0"/>
<path d="M559 888l10-7 10 1-9 7z" fill="#777"/><circle cx="576" cy="877" r="5" fill="#999"/><circle cx="576" cy="877" r="2" fill="#555"/><path d="M559 888l3 2 8 0" stroke="#aaa" fill="none"/>
<rect x="614" y="871" width="9" height="14" rx="4" fill="#2ba0da"/><path d="M618.500 885v4M613 886h11" stroke="#2ba0da"/><rect x="623" y="882" width="14" height="9" fill="#fff"/><rect x="625" y="884" width="10" height="5" fill="#29a829"/>
<rect x="668" y="867" width="26" height="25" fill="#333"/><path d="M675 873h12v14h-12z" fill="#fff"/><rect x="678" y="876" width="6" height="6" fill="#333"/>
<rect x="722" y="867" width="26" height="25" fill="#d9e6e6"/><path d="M729 871l9 2 3 7-4 6-8 3 4-6-3-2 3-3-3-3z" fill="#27b5a4"/><path d="M737 873l4 7-4 6-2-6z" fill="#13776f"/><text x="735" y="891" style="font-size:5px;fill:#222">MAX</text>
<circle cx="790" cy="880" r="11" fill="#dc4437"/><path d="M790 880l-9.500 5.500A11 11 0 0 1 784 871z" fill="#38a853"/><path d="M790 880h10.500a11 11 0 0 1-15 9.500z" fill="#ffce3d"/><circle cx="790" cy="880" r="5.500" fill="#fff"/><circle cx="790" cy="880" r="4" fill="#4688f1"/>
<rect x="834" y="867" width="25" height="25" fill="#d13b1e"/><path d="M841 884v-4a5.500 5.500 0 0 1 11 0v4" fill="none" stroke="#fff" stroke-width="1.400"/><rect x="840" y="881" width="3" height="5" fill="#fff"/><rect x="850" y="881" width="3" height="5" fill="#fff"/>
<!-- tray -->
<rect x="1242" y="871" width="30" height="18" fill="#fff"/><rect x="1244" y="873" width="26" height="12" fill="none" stroke="#333"/><path d="M1246 876h22M1246 879h22M1250 882h14" stroke="#333" stroke-dasharray="1.500 1"/>
<path d="M1291 882l4-4 4 4z" fill="#e0e0e0"/>
<path d="M1325 878h3l4-4v14l-4-4h-3zM1335 877c2 3 2 6 0 8M1338 875c3 4 3 9 0 12" fill="none" stroke="#e6e6e6"/>
<rect x="1357" y="877" width="15" height="13" rx="1" fill="none" stroke="#e6e6e6" stroke-width="1.500"/><path d="M1357 884h15M1364.500 884v6" stroke="#e6e6e6" stroke-width="1.500"/>
<rect x="1390" y="877" width="15" height="10" fill="none" stroke="#e6e6e6" stroke-width="1.300"/><rect x="1391" y="878" width="8" height="8" fill="#fff"/><rect x="1405" y="880" width="2" height="4" fill="#e6e6e6"/>
<path d="M1424 887h2v1h-2zM1427 884h2v4h-2zM1430 881h2v7h-2zM1433 878h2v10h-2zM1436 875h2v13h-2z" fill="#e6e6e6"/>
<rect x="1460" y="873" width="15" height="13" fill="none" stroke="#e6e6e6" stroke-width="1.400"/><path d="M1463 877h9M1463 880h9M1463 883h5M1464 886l3 3 3-3" fill="none" stroke="#e6e6e6"/>
<text x="1490" y="890" style="font-size:20px;fill:#bbb;font-family:'Liberation Serif',serif">A</text><text x="1489" y="889" style="font-size:8px;fill:#eee">x</text>
<text x="1536" y="877" style="font-size:12.500px;fill:#f0f0f0">15:27</text>
<text x="1518" y="895" style="font-size:12.500px;fill:#f0f0f0">2015/02/10</text>
</svg>
</body></html>
